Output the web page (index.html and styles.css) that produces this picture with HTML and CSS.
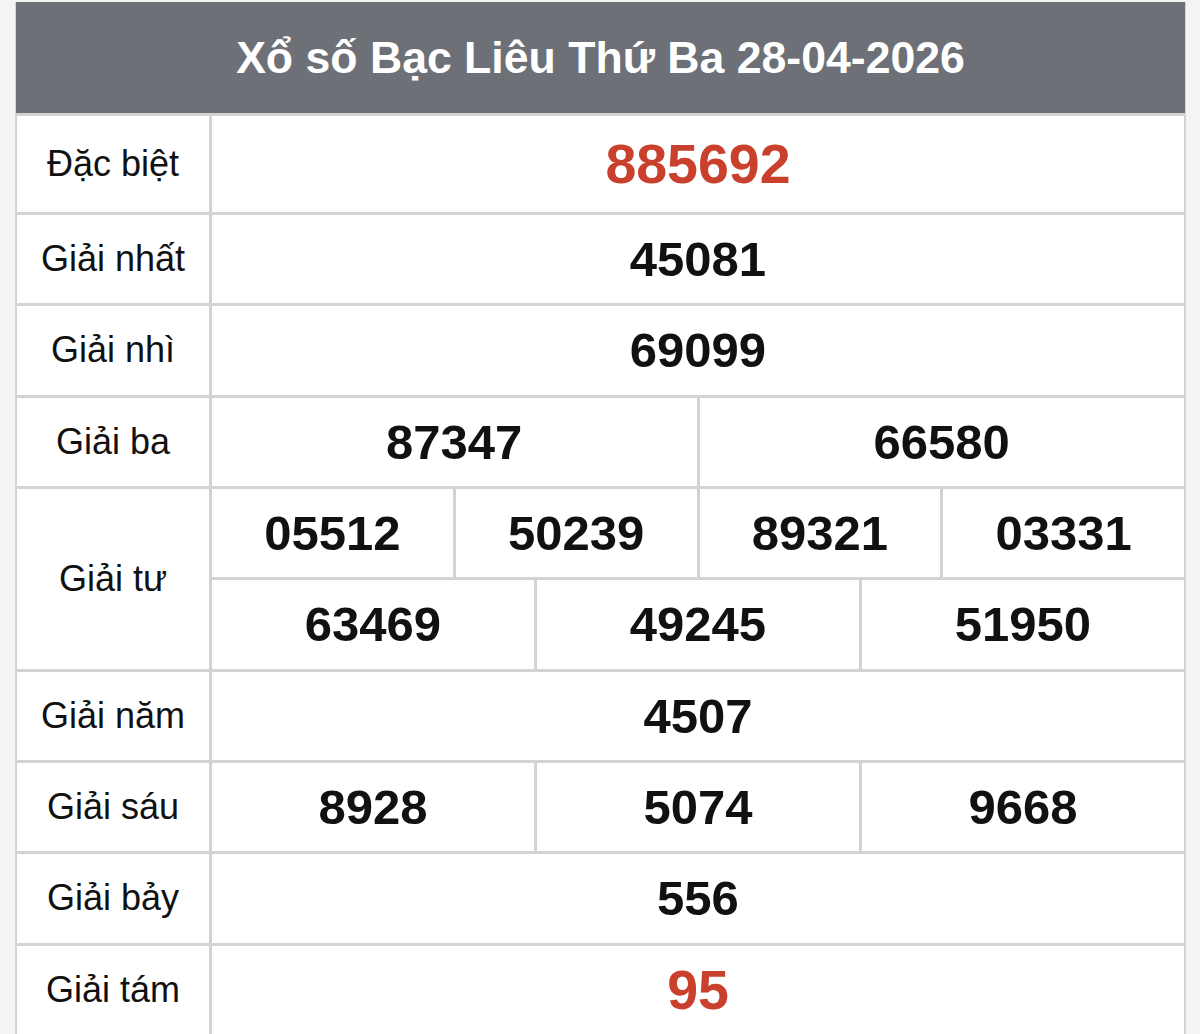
FILE: index.html
```html
<!DOCTYPE html>
<html lang="vi">
<head>
<meta charset="utf-8">
<title>Xổ số Bạc Liêu Thứ Ba 28-04-2026</title>
<link rel="stylesheet" href="styles.css">
</head>
<body>
<div class="board">
  <div class="title">Xổ số Bạc Liêu Thứ Ba 28-04-2026</div>
  <div class="grid">
    <div class="label first">Đặc biệt</div>
    <div class="vals first"><div class="num special">885692</div></div>

    <div class="label">Giải nhất</div>
    <div class="vals"><div class="num">45081</div></div>

    <div class="label">Giải nhì</div>
    <div class="vals"><div class="num">69099</div></div>

    <div class="label">Giải ba</div>
    <div class="vals"><div class="num">87347</div><div class="num">66580</div></div>

    <div class="label tall">Giải tư</div>
    <div class="stack">
      <div class="vals"><div class="num">05512</div><div class="num">50239</div><div class="num">89321</div><div class="num">03331</div></div>
      <div class="vals"><div class="num">63469</div><div class="num">49245</div><div class="num">51950</div></div>
    </div>

    <div class="label">Giải năm</div>
    <div class="vals"><div class="num">4507</div></div>

    <div class="label">Giải sáu</div>
    <div class="vals"><div class="num">8928</div><div class="num">5074</div><div class="num">9668</div></div>

    <div class="label">Giải bảy</div>
    <div class="vals"><div class="num">556</div></div>

    <div class="label">Giải tám</div>
    <div class="vals"><div class="num special">95</div></div>
  </div>
</div>
</body>
</html>
```
FILE: styles.css
```css
html, body {
  margin: 0;
  padding: 0;
  background: #f4f4f4;
}
body {
  font-family: "Liberation Sans", Arial, sans-serif;
  color: #111;
}
.board {
  width: 1171px;
  margin: 2px 0 0 15px;
  background: #d3d3d3;
  padding: 0 2px;
  box-sizing: border-box;
}
.title {
  height: 111px;
  margin: 0 -1px;
  background: #6d7177;
  color: #fff;
  font-weight: bold;
  font-size: 44.6px;
  display: flex;
  align-items: center;
  justify-content: center;
}
.grid {
  display: grid;
  grid-template-columns: 192px 1fr;
  gap: 3px;
  padding-top: 3px;
}
.label {
  background: #fff;
  height: 88.33px;
  font-size: 36px;
  display: flex;
  align-items: center;
  justify-content: center;
}
.label.first {
  height: 96px;
}
.label.tall {
  height: auto;
}
.vals {
  display: flex;
  gap: 3px;
  height: 88.33px;
}
.vals.first {
  height: 96px;
}
.stack {
  display: flex;
  flex-direction: column;
  gap: 3px;
}
.num {
  flex: 1;
  background: #fff;
  display: flex;
  align-items: center;
  justify-content: center;
  font-weight: bold;
  font-size: 49px;
  color: #111;
}
.num.special {
  color: #c9412c;
  font-size: 55.5px;
}
```
